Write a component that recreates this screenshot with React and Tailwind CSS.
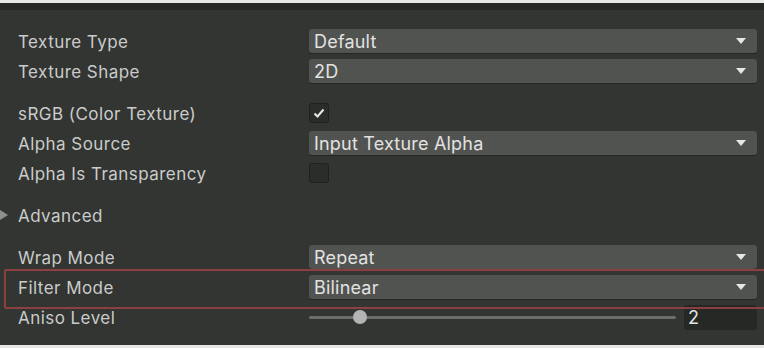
import React from "react";

const Arrow = () => (
  <svg width="12" height="8" viewBox="0 0 12 8" className="shrink-0">
    <path d="M1 1 H11 L6 7 Z" fill="#e6e6e6" />
  </svg>
);

const Dropdown = ({ value }) => (
  <div className="flex h-[24px] flex-1 items-center justify-between rounded-[3px] bg-[#515350] pl-[5px] pr-[10px] shadow-[0_1px_0_#252725] text-[18px] tracking-[0.2px] text-[#e2e2e2]">
    <span>{value}</span>
    <Arrow />
  </div>
);

const Checkbox = ({ checked }) => (
  <div className="flex h-[20px] w-[20px] items-center justify-center rounded-[3px] border border-[#1f211f] bg-[#2b2d2b]">
    {checked && (
      <svg width="12" height="10" viewBox="0 0 12 10">
        <path d="M1.5 5.5 L4.5 8.5 L10.5 1.5" stroke="#e8e8e8" strokeWidth="2" fill="none" />
      </svg>
    )}
  </div>
);

const Row = ({ label, children }) => (
  <div className="flex h-[30px] items-center">
    <div className="w-[309px] shrink-0 pl-[18px] pt-[3px] text-[17px] tracking-[0.45px] text-[#cbcbcb]">{label}</div>
    <div className="flex flex-1 items-center pr-[7px]">{children}</div>
  </div>
);

export default function App() {
  return (
    <div
      className="relative flex h-[348px] w-[764px] flex-col overflow-hidden bg-[#323532]"
      style={{ fontFamily: "Inter, 'Noto Sans', sans-serif" }}
    >
      <div className="h-[3px] bg-[#e8e8e6]" />
      <div className="h-[7px] bg-[#272927]" />
      <div className="flex flex-col pt-[16px]">
        <Row label="Texture Type">
          <Dropdown value="Default" />
        </Row>
        <Row label="Texture Shape">
          <Dropdown value="2D" />
        </Row>
        <div className="h-[12px]" />
        <Row label="sRGB (Color Texture)">
          <Checkbox checked />
        </Row>
        <Row label="Alpha Source">
          <Dropdown value="Input Texture Alpha" />
        </Row>
        <Row label="Alpha Is Transparency">
          <Checkbox />
        </Row>
        <div className="h-[12px]" />
        <div className="flex h-[30px] items-center">
          <svg width="8" height="10" viewBox="0 0 8 10" className="mr-[10px]">
            <path d="M0 0 L8 5 L0 10 Z" fill="#8e908e" />
          </svg>
          <span className="pt-[3px] text-[17px] tracking-[0.45px] text-[#cbcbcb]">Advanced</span>
        </div>
        <div className="h-[12px]" />
        <Row label="Wrap Mode">
          <Dropdown value="Repeat" />
        </Row>
        <Row label="Filter Mode">
          <Dropdown value="Bilinear" />
        </Row>
        <Row label="Aniso Level">
          <div className="flex flex-1 items-center">
            <div className="relative flex h-[14px] flex-1 items-center mr-[8px]">
              <div className="h-[3px] w-full rounded-full bg-[#6c6e6c]" />
              <div className="absolute left-[44px] top-0 h-[14px] w-[14px] rounded-full bg-[#b4b4b4]" />
            </div>
            <div className="flex h-[25px] w-[73px] items-center rounded-[3px] bg-[#262826] pl-[4px] text-[18px] text-[#e2e2e2]">
              2
            </div>
          </div>
        </Row>
      </div>
      <div className="absolute bottom-0 left-0 h-[3px] w-full bg-[#e8e8e6]" />
      <div className="pointer-events-none absolute left-[4px] top-[269px] h-[40px] w-[770px] rounded-[2px] border-2 border-[#a44444]/80" />
    </div>
  );
}
